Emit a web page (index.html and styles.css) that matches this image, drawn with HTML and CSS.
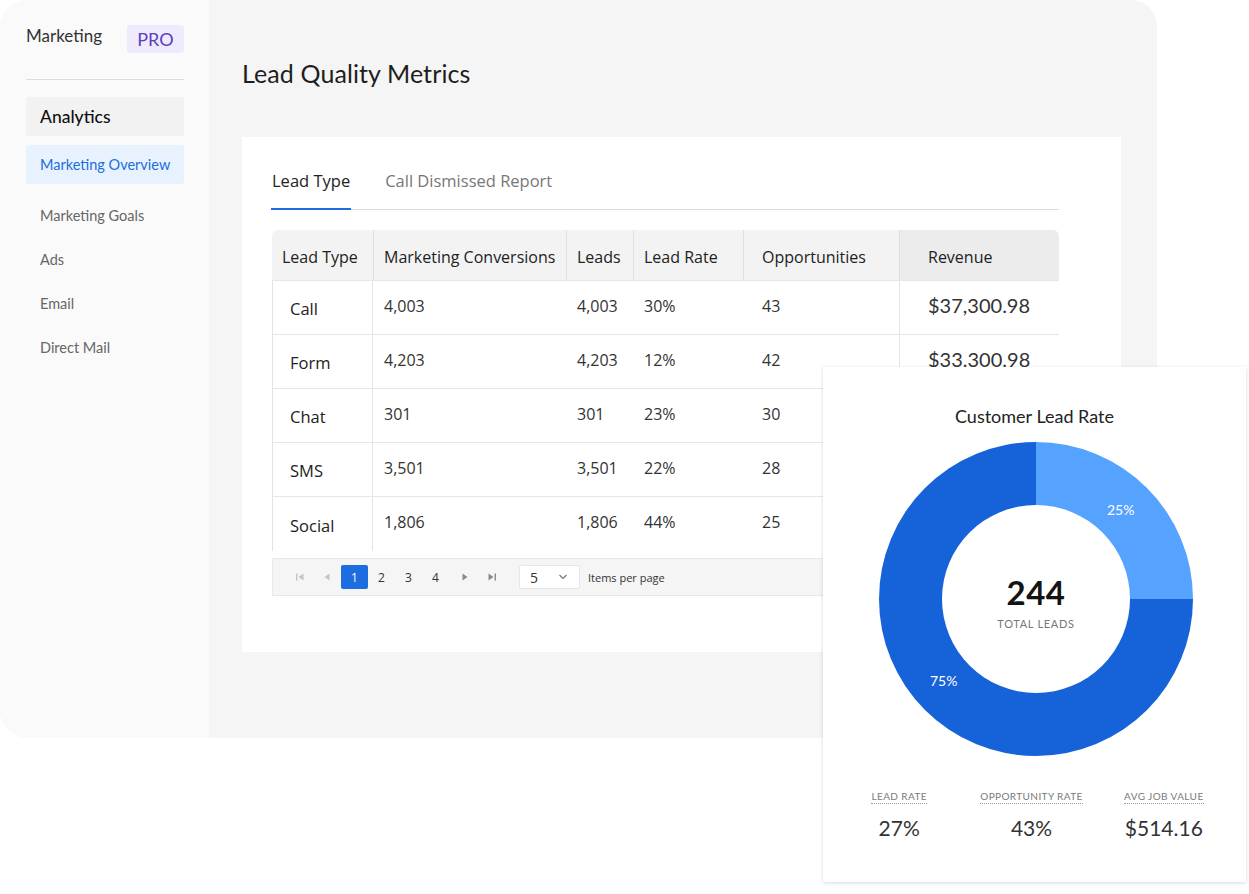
FILE: index.html
```html
<!DOCTYPE html>
<html>
<head>
<meta charset="utf-8">
<link rel="stylesheet" href="styles.css">
</head>
<body>
<div class="page">
  <div class="frame">
    <aside class="sidebar">
      <div class="brand">
        <span class="brand-name">Marketing</span>
        <span class="pro">PRO</span>
      </div>
      <div class="divider"></div>
      <div class="nav-head">Analytics</div>
      <div class="nav-active">Marketing Overview</div>
      <div class="nav-item">Marketing Goals</div>
      <div class="nav-item">Ads</div>
      <div class="nav-item">Email</div>
      <div class="nav-item">Direct Mail</div>
    </aside>
    <main class="main">
      <h1 class="title">Lead Quality Metrics</h1>
      <section class="card">
        <div class="tabs">
          <div class="tab tab-active">Lead Type</div>
          <div class="tab">Call Dismissed Report</div>
        </div>
        <table class="grid">
          <colgroup>
            <col class="c1"><col class="c2"><col class="c3"><col class="c4"><col class="c5"><col class="c6">
          </colgroup>
          <thead>
            <tr>
              <th class="first">Lead Type</th>
              <th>Marketing Conversions</th>
              <th>Leads</th>
              <th>Lead Rate</th>
              <th class="opp">Opportunities</th>
              <th class="rev">Revenue</th>
            </tr>
          </thead>
          <tbody>
            <tr><td class="type">Call</td><td>4,003</td><td>4,003</td><td>30%</td><td class="opp">43</td><td class="rev">$37,300.98</td></tr>
            <tr><td class="type">Form</td><td>4,203</td><td>4,203</td><td>12%</td><td class="opp">42</td><td class="rev">$33.300.98</td></tr>
            <tr><td class="type">Chat</td><td>301</td><td>301</td><td>23%</td><td class="opp">30</td><td class="rev"></td></tr>
            <tr><td class="type">SMS</td><td>3,501</td><td>3,501</td><td>22%</td><td class="opp">28</td><td class="rev"></td></tr>
            <tr class="last"><td class="type">Social</td><td>1,806</td><td>1,806</td><td>44%</td><td class="opp">25</td><td class="rev"></td></tr>
          </tbody>
        </table>
        <div class="pager">
          <span class="pbtn dim"><svg width="10" height="10" viewBox="0 0 10 10"><rect x="1" y="1.5" width="1.4" height="7" fill="#c4c4c4"/><path d="M8.5 1.5 L3.5 5 L8.5 8.5 Z" fill="#c4c4c4"/></svg></span>
          <span class="pbtn dim"><svg width="10" height="10" viewBox="0 0 10 10"><path d="M7.5 1.5 L2.5 5 L7.5 8.5 Z" fill="#c4c4c4"/></svg></span>
          <span class="pbtn cur">1</span>
          <span class="pbtn">2</span>
          <span class="pbtn">3</span>
          <span class="pbtn">4</span>
          <span class="pbtn nav"><svg width="10" height="10" viewBox="0 0 10 10"><path d="M2.5 1.5 L7.5 5 L2.5 8.5 Z" fill="#8a8a8a"/></svg></span>
          <span class="pbtn"><svg width="10" height="10" viewBox="0 0 10 10"><path d="M1.5 1.5 L6.5 5 L1.5 8.5 Z" fill="#8a8a8a"/><rect x="7.6" y="1.5" width="1.4" height="7" fill="#8a8a8a"/></svg></span>
          <span class="select"><span>5</span><svg width="10" height="6" viewBox="0 0 10 6"><path d="M1.5 1 L5 4.5 L8.5 1" fill="none" stroke="#777" stroke-width="1.2"/></svg></span>
          <span class="ipp">Items per page</span>
        </div>
      </section>
    </main>
  </div>

  <div class="donut-card">
    <div class="dc-title">Customer Lead Rate</div>
    <div class="donut-wrap">
      <div class="donut">
        <div class="hole">
          <div class="total">244</div>
          <div class="total-label">TOTAL LEADS</div>
        </div>
      </div>
      <span class="pct pct25">25%</span>
      <span class="pct pct75">75%</span>
    </div>
    <div class="stats">
      <div class="stat"><span class="stat-label">LEAD RATE</span><span class="stat-val">27%</span></div>
      <div class="stat"><span class="stat-label">OPPORTUNITY RATE</span><span class="stat-val">43%</span></div>
      <div class="stat"><span class="stat-label">AVG JOB VALUE</span><span class="stat-val">$514.16</span></div>
    </div>
  </div>
</div>
</body>
</html>
```
FILE: styles.css
```css
* { box-sizing: border-box; }
html, body { margin: 0; padding: 0; background: #fff; }
body { font-family: "Lato", "Noto Sans", sans-serif; color: #222; width: 1249px; height: 894px; overflow: hidden; }

.page { position: relative; width: 1249px; height: 894px; }

.frame {
  width: 1157px; height: 738px;
  display: flex;
  border-radius: 28px 26px 26px 28px;
  overflow: hidden;
  background: #f5f5f5;
}

/* Sidebar */
.sidebar {
  width: 209px; flex: none;
  background: #fafafa;
  padding: 25px 25px 0 26px;
  display: flex; flex-direction: column;
}
.brand { display: flex; justify-content: space-between; align-items: flex-start; height: 28px; }
.brand-name { font-size: 17px; line-height: 22px; color: #333; }
.pro {
  width: 57px; height: 28px; border-radius: 3px;
  background: #efebfd; color: #5a3fc0;
  font-size: 18px; line-height: 28px; text-align: center;
}
.divider { height: 1px; background: #dcdcdc; margin-top: 26px; }
.nav-head {
  margin-top: 17px; height: 39px; border-radius: 3px;
  background: #f2f2f2; padding-left: 14px;
  font-size: 17.5px; line-height: 39px; color: #111; font-weight: 500;
}
.nav-active {
  margin-top: 9px; height: 39px; border-radius: 3px;
  background: #e8f2fe; padding-left: 14px;
  font-size: 14.5px; line-height: 39px; color: #1b6de0;
}
.nav-active + .nav-item { margin-top: 10px; }
.nav-item { height: 44px; line-height: 44px; padding-left: 14px; font-size: 14.5px; color: #666; }

/* Main */
.main { flex: 1; padding: 58px 37px 0 33px; }
.title { margin: 0 0 49px; font-size: 25px; line-height: 30px; font-weight: 400; color: #1e1e1e; letter-spacing: 0.1px; }

.card { background: #fff; height: 515px; padding: 32px 62px 0 29px; font-family: "Open Sans", "Lato", sans-serif; }

.tabs { display: flex; border-bottom: 1px solid #dcdcdc; }
.tab { font-size: 16.5px; line-height: 24px; padding: 0 1px 16px; color: #777; margin-right: 33px; }
.tab-active { color: #222; border-bottom: 2px solid #1b6de0; margin-bottom: -1px; padding-bottom: 15px; }

.grid {
  margin-top: 20px; margin-left: 1px;
  width: 787px; border-collapse: separate; border-spacing: 0;
  table-layout: fixed;
  font-size: 16px;
}
.c1 { width: 101px; } .c2 { width: 193px; } .c3 { width: 67px; }
.c4 { width: 110px; } .c5 { width: 156px; } .c6 { width: 160px; }

.grid th {
  height: 50px; background: #f3f3f3; font-weight: 400; text-align: left;
  padding: 4px 0 0 10px; color: #222; white-space: nowrap;
  border-left: 1px solid #e0e0e0;
}
.grid th.first { border-left: none; border-top-left-radius: 6px; }
.grid th.rev { background: #ececec; border-top-right-radius: 6px; padding-left: 28px; }
.grid th.opp { padding-left: 18px; }

.grid td {
  height: 54px; padding: 0 0 4px 11px; color: #333;
  border-top: 1px solid #e6e6e6; white-space: nowrap;
}
.grid td.type { padding: 2px 0 0 17px; border-left: 1px solid #e3e3e3; border-right: 1px solid #e3e3e3; font-size: 16.5px; color: #222; }
.grid td.opp { padding-left: 19px; }
.grid td.rev { border-left: 1px solid #e3e3e3; padding-left: 28px; font-family: "Lato", sans-serif; font-size: 20px; color: #333; padding-bottom: 5px; }
.grid tr.last td { height: 55px; }

.pager {
  margin-top: 7px; margin-left: 1px;
  width: 787px; height: 38px;
  background: #f5f5f5; border: 1px solid #e9e9e9;
  display: flex; align-items: center; padding-left: 13px;
  font-size: 12px; color: #333;
}
.pbtn { width: 27px; height: 24px; display: flex; align-items: center; justify-content: center; }
.pbtn.cur { background: #1b6de0; color: #fff; border-radius: 2px; margin-left: 1px; }
.pbtn.nav { margin-left: 2px; }
.select {
  margin-left: 14px; width: 61px; height: 24px; background: #fff;
  border: 1px solid #e6e6e6; border-radius: 2px;
  display: flex; align-items: center; justify-content: space-between;
  padding: 0 11px 0 10px; font-size: 14px; color: #333;
}
.ipp { margin-left: 8px; font-size: 11px; color: #333; }

/* Donut card */
.donut-card {
  position: absolute; left: 823px; top: 367px;
  width: 423px; height: 515px; background: #fff;
  box-shadow: 0 1px 4px rgba(0,0,0,0.16);
  padding: 37px 16px 0 10px;
  display: flex; flex-direction: column; align-items: center;
}
.dc-title { font-size: 18px; line-height: 24px; color: #222; margin-left: 6px; }
.donut-wrap { position: relative; margin-top: 14px; margin-left: 9px; }
.donut {
  width: 314px; height: 314px; border-radius: 50%;
  background: conic-gradient(#56a2ff 0 25%, #1662d8 25% 100%);
  display: flex; align-items: center; justify-content: center;
}
.hole {
  width: 188px; height: 188px; border-radius: 50%; background: #fff;
  display: flex; flex-direction: column; align-items: center; justify-content: center;
  padding-top: 6px;
}
.total { font-size: 33px; line-height: 36px; font-weight: 700; color: #141414; letter-spacing: 0.5px; }
.total-label { font-size: 11px; line-height: 14px; color: #777; letter-spacing: 0.7px; margin-top: 7px; }
.pct { position: absolute; color: #fff; font-size: 14px; line-height: 16px; }
.pct25 { left: 228px; top: 60px; }
.pct75 { left: 51px; top: 231px; }

.stats { width: 100%; display: grid; grid-template-columns: 1fr 1fr 1fr; margin-top: 34px; }
.stat { display: flex; flex-direction: column; align-items: center; }
.stat-label {
  font-size: 10px; line-height: 13px; color: #7a7a7a; letter-spacing: 0.4px;
  border-bottom: 1px dotted #9a9a9a;
}
.stat-val { margin-top: 10px; font-size: 21px; line-height: 28px; color: #333; }
```
